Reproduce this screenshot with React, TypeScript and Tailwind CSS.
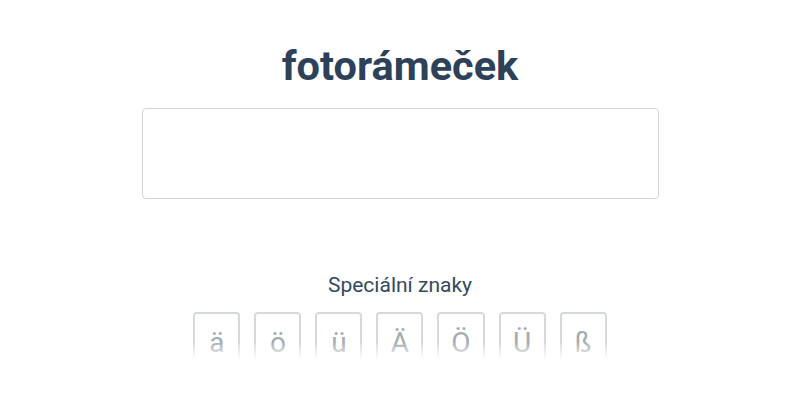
const chars = ["ä", "ö", "ü", "Ä", "Ö", "Ü", "ß"]

export default function App() {
  return (
    <div
      className="w-[800px] h-[400px] bg-white flex flex-col items-center"
      style={{ fontFamily: "Roboto, 'Liberation Sans', sans-serif" }}
    >
      <h1 className="mt-[38px] text-[41.5px] leading-[56px] font-bold text-[#2d4159]">
        fotorámeček
      </h1>
      <div className="mt-[14px] w-[517px] h-[91px] border border-[#d4d4d4] rounded-[4px] bg-white" />
      <div className="mt-[72px] text-[21px] leading-[28px] text-[#34495e]">
        Speciální znaky
      </div>
      <div className="relative mt-[13px] h-[48px] overflow-hidden">
        <div className="flex gap-[14px]">
          {chars.map((c) => (
            <div
              key={c}
              className="min-w-[47px] h-[62px] px-[12px] border-2 border-[#d6d9dc] rounded-[4px] flex items-center justify-center text-[28px] text-[#a4abb2]"
            >
              {c}
            </div>
          ))}
        </div>
        <div className="absolute left-0 right-0 bottom-0 h-[18px] bg-gradient-to-b from-white/0 to-white" />
      </div>
    </div>
  )
}
